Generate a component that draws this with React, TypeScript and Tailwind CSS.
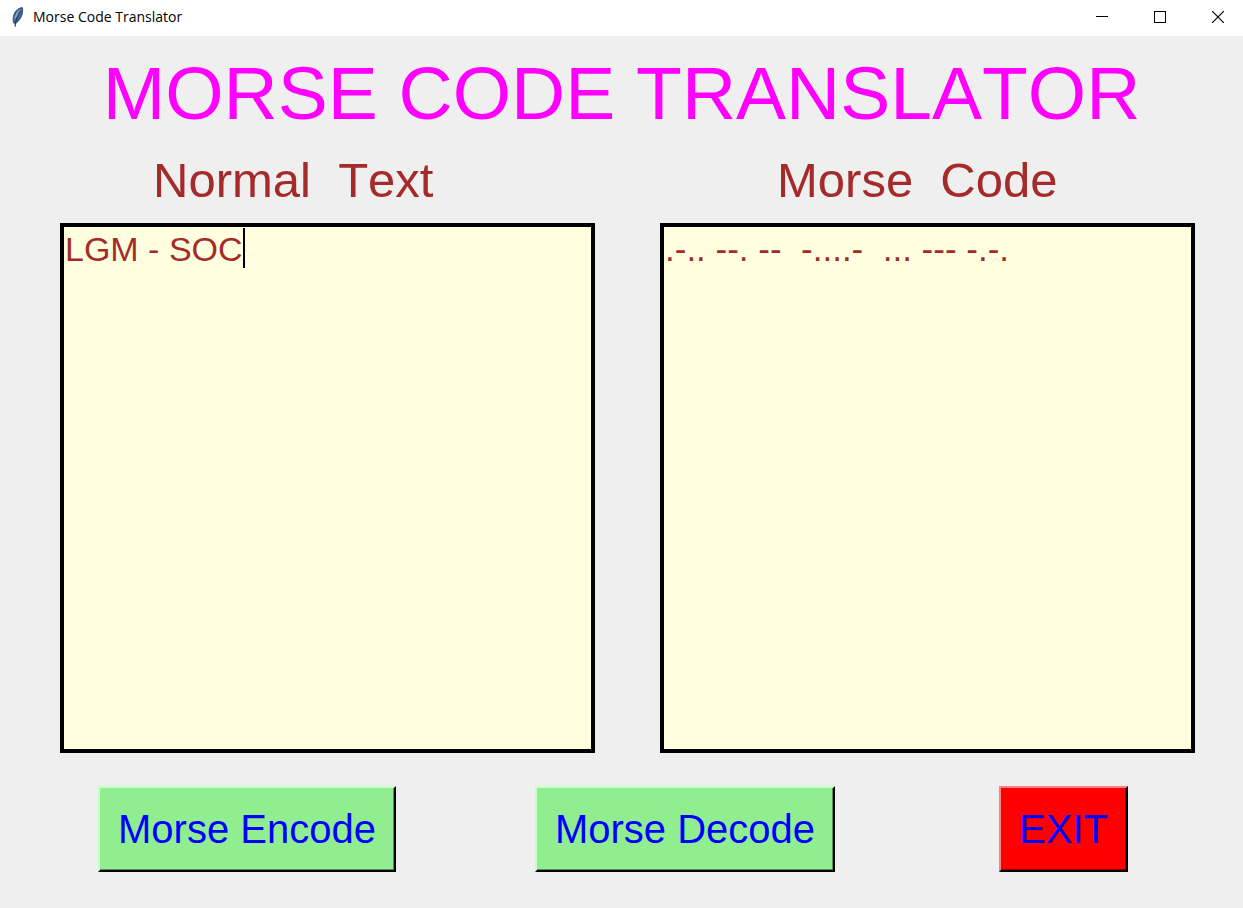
import { useState } from "react";
import type { ReactNode } from "react";

const MORSE: Record<string, string> = {
  A: ".-", B: "-...", C: "-.-.", D: "-..", E: ".", F: "..-.", G: "--.", H: "....", I: "..",
  J: ".---", K: "-.-", L: ".-..", M: "--", N: "-.", O: "---", P: ".--.", Q: "--.-", R: ".-.",
  S: "...", T: "-", U: "..-", V: "...-", W: ".--", X: "-..-", Y: "-.--", Z: "--..",
  "0": "-----", "1": ".----", "2": "..---", "3": "...--", "4": "....-", "5": ".....",
  "6": "-....", "7": "--...", "8": "---..", "9": "----.", "-": "-....-", " ": "",
};

const encode = (text: string) =>
  text.toUpperCase().split("").map((c) => MORSE[c] ?? c).join(" ");

const decode = (code: string) =>
  code
    .split(" ")
    .map((c) => (c === "" ? " " : Object.keys(MORSE).find((k) => MORSE[k] === c) ?? c))
    .join("");

function Feather() {
  return (
    <svg viewBox="0 0 16 20" className="h-5 w-4" aria-hidden="true">
      <path d="M13.400 .6C10 .8 6.500 3.200 5 7.500C3.900 10.800 3.800 13.800 4.800 16.200L7.500 15.800C11.800 12.800 14.600 6 13.400 .6Z" fill="#3d679b" stroke="#2b3b55" strokeWidth="0.8" />
      <path d="M11.800 2.200C8.600 3.400 5.900 7.500 5.400 12.500C8.200 10.200 11 6.500 11.800 2.200Z" fill="#8db0d9" />
      <path d="M11.600 3.500C9 7 7 12 6 19.600" fill="none" stroke="#2b3442" strokeWidth="1.100" />
    </svg>
  );
}

function WindowButton({ label, children }: { label: string; children: ReactNode }) {
  return (
    <button type="button" aria-label={label} className="flex w-[50px] items-center justify-center">
      <svg viewBox="0 0 12 12" className="size-3" fill="none" stroke="#000" shapeRendering="crispEdges" aria-hidden="true">
        {children}
      </svg>
    </button>
  );
}

const bevel =
  "h-[86px] border-2 border-r-black border-b-black px-[18px] text-[40px] leading-none whitespace-nowrap text-[#0000ff]";
const greenBevel =
  "border-t-[#c8ffc8] border-l-[#c8ffc8] bg-[#90ee90] shadow-[inset_-1px_-1px_0_#569056]";
const redBevel = "border-t-[#ff8080] border-l-[#ff8080] bg-[#ff0000] shadow-[inset_-1px_-1px_0_#990000]";
const field =
  "block w-full min-h-40 flex-1 resize-none rounded-none border-4 border-black bg-[#ffffe0] px-[1px] py-0.5 leading-10 text-[#a52a2a] outline-none";

export default function App() {
  const [text, setText] = useState("LGM - SOC");
  const [code, setCode] = useState(".-.. --. --  -....-  ... --- -.-.");
  const [touched, setTouched] = useState(false);

  return (
    <div className="flex min-h-screen flex-col bg-[#efefef] font-['Liberation_Sans',Arial,sans-serif] [font-kerning:none]">
      <header className="flex h-9 shrink-0 items-stretch justify-between bg-white">
        <div className="flex items-center gap-2 pb-0.5 pl-[9px] font-['Open_Sans','Noto_Sans',sans-serif] text-sm text-black">
          <Feather />
          <span>Morse Code Translator</span>
        </div>
        <div className="flex gap-2 pb-0.5">
          <WindowButton label="Minimize"><path d="M0 5.500H12" /></WindowButton>
          <WindowButton label="Maximize"><path d="M.5 .5H11.500V11.500H.5Z" /></WindowButton>
          <WindowButton label="Close"><path d="M0 0L12 12M12 0L0 12" shapeRendering="auto" strokeWidth="1.2" /></WindowButton>
        </div>
      </header>

      <main className="flex flex-1 flex-col pt-[15px] pb-9">
        <h1 className="text-center text-[75px] leading-[84px] text-[#ff00ff]">MORSE CODE TRANSLATOR</h1>

        <div className="grid flex-1 grid-cols-2 gap-x-[65px] pr-12 pl-[60px]">
          <section className="flex flex-col">
            <label htmlFor="plain" className="block h-[88px] pt-4 pl-[93px] text-[49px] leading-[58px] whitespace-pre text-[#a52a2a]">
              {"Normal  Text"}
            </label>
            <div className="relative flex flex-1 flex-col">
              <textarea
                id="plain"
                spellCheck={false}
                value={text}
                onFocus={() => setTouched(true)}
                onChange={(e) => setText(e.target.value)}
                className={`${field} text-[34px]`}
              />
              {!touched && <span className="pointer-events-none absolute top-[5px] left-[183px] h-10 w-0.5 bg-black" />}
            </div>
          </section>
          <section className="flex flex-col">
            <label htmlFor="morse" className="block h-[88px] pt-4 pl-[117px] text-[49px] leading-[58px] whitespace-pre text-[#a52a2a]">
              {"Morse  Code"}
            </label>
            <textarea
              id="morse"
              spellCheck={false}
              value={code}
              onChange={(e) => setCode(e.target.value)}
              className={`${field} text-[35px]`}
            />
          </section>
        </div>

        <div className="flex pt-[33px] pr-[115px] pl-[98px]">
          <button type="button" onClick={() => setCode(encode(text))} className={`${bevel} ${greenBevel}`}>
            Morse Encode
          </button>
          <button type="button" onClick={() => setText(decode(code))} className={`ml-[139px] ${bevel} ${greenBevel}`}>
            Morse Decode
          </button>
          <button type="button" onClick={() => window.close()} className={`ml-auto ${bevel} ${redBevel}`}>
            EXIT
          </button>
        </div>
      </main>
    </div>
  );
}
